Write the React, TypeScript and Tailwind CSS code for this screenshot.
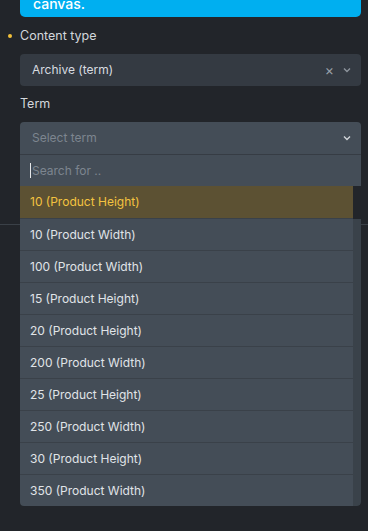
import React from "react";

const terms = [
  "10 (Product Height)",
  "10 (Product Width)",
  "100 (Product Width)",
  "15 (Product Height)",
  "20 (Product Height)",
  "200 (Product Width)",
  "25 (Product Height)",
  "250 (Product Width)",
  "30 (Product Height)",
  "350 (Product Width)",
];

const Chevron = ({ className }: { className?: string }) => (
  <svg width="8" height="6" viewBox="0 0 8 6" className={className}>
    <path d="M1 1.5 L4 4.5 L7 1.5" fill="none" stroke="currentColor" strokeWidth="1.4" />
  </svg>
);

const App = () => {
  return (
    <div className="relative w-[368px] h-[531px] overflow-hidden bg-[#22252a] font-['Inter',sans-serif] text-[12px]">
      {/* panel separator behind the dropdown */}
      <div className="absolute left-0 right-0 top-[224px] h-px bg-[#3a4047]" />

      <div className="relative pl-[20px] pr-[7px]">
        <div className="h-[17px] rounded-b-[5px] bg-[#00aff0] pl-[13px] overflow-hidden">
          <div className="-mt-[4px] text-white font-medium text-[14px] leading-[16px]">canvas.</div>
        </div>

        <div className="relative mt-[10px] h-[18px] flex items-center text-[12.5px] text-[#d3d7dc]">
          <span className="absolute -left-[12px] top-[7px] w-[4px] h-[4px] rounded-full bg-[#f3c13a]" />
          Content type
        </div>

        <div className="mt-[9px] h-[32px] rounded-[4px] bg-[#343a42] flex items-center pl-[12px] pr-[10px] text-[#d8dce0]">
          <span className="flex-1">Archive (term)</span>
          <span className="text-[#9aa1a9] text-[14px] leading-none mr-[9px]">×</span>
          <Chevron className="text-[#8d949c]" />
        </div>

        <div className="mt-[9px] h-[18px] flex items-center text-[12.5px] text-[#d3d7dc]">Term</div>

        <div className="mt-[9px] rounded-[4px] overflow-hidden">
          <div className="h-[33px] bg-[#444d57] flex items-center pl-[12px] pr-[10px] text-[#7d858f] border-b border-[#363c44]">
            <span className="flex-1">Select term</span>
            <Chevron className="text-[#d0d4d8]" />
          </div>
          <div className="h-[31px] bg-[#444d57] flex items-center pl-[10px] text-[#7d858f]">
            <span className="w-px h-[15px] bg-[#e6e8ea] mr-px" />
            Search for ..
          </div>
          <div className="flex">
            <div className="flex-1">
              {terms.map((t, i) => (
                <div
                  key={i}
                  className={
                    i === 0
                      ? "h-[32px] flex items-center pl-[10px] bg-[#5c5133] text-[#f4c340]"
                      : "h-[32px] flex items-center pl-[10px] bg-[#444d57] text-[#e0e4e8] border-t border-[#3a4149]"
                  }
                >
                  {t}
                </div>
              ))}
            </div>
            <div className="w-[8px] flex flex-col">
              <div className="h-[33px] bg-[#22252a]" />
              <div className="flex-1 bg-[#3a424a] rounded-br-[4px]" />
            </div>
          </div>
        </div>
      </div>
    </div>
  );
};

export default App;
